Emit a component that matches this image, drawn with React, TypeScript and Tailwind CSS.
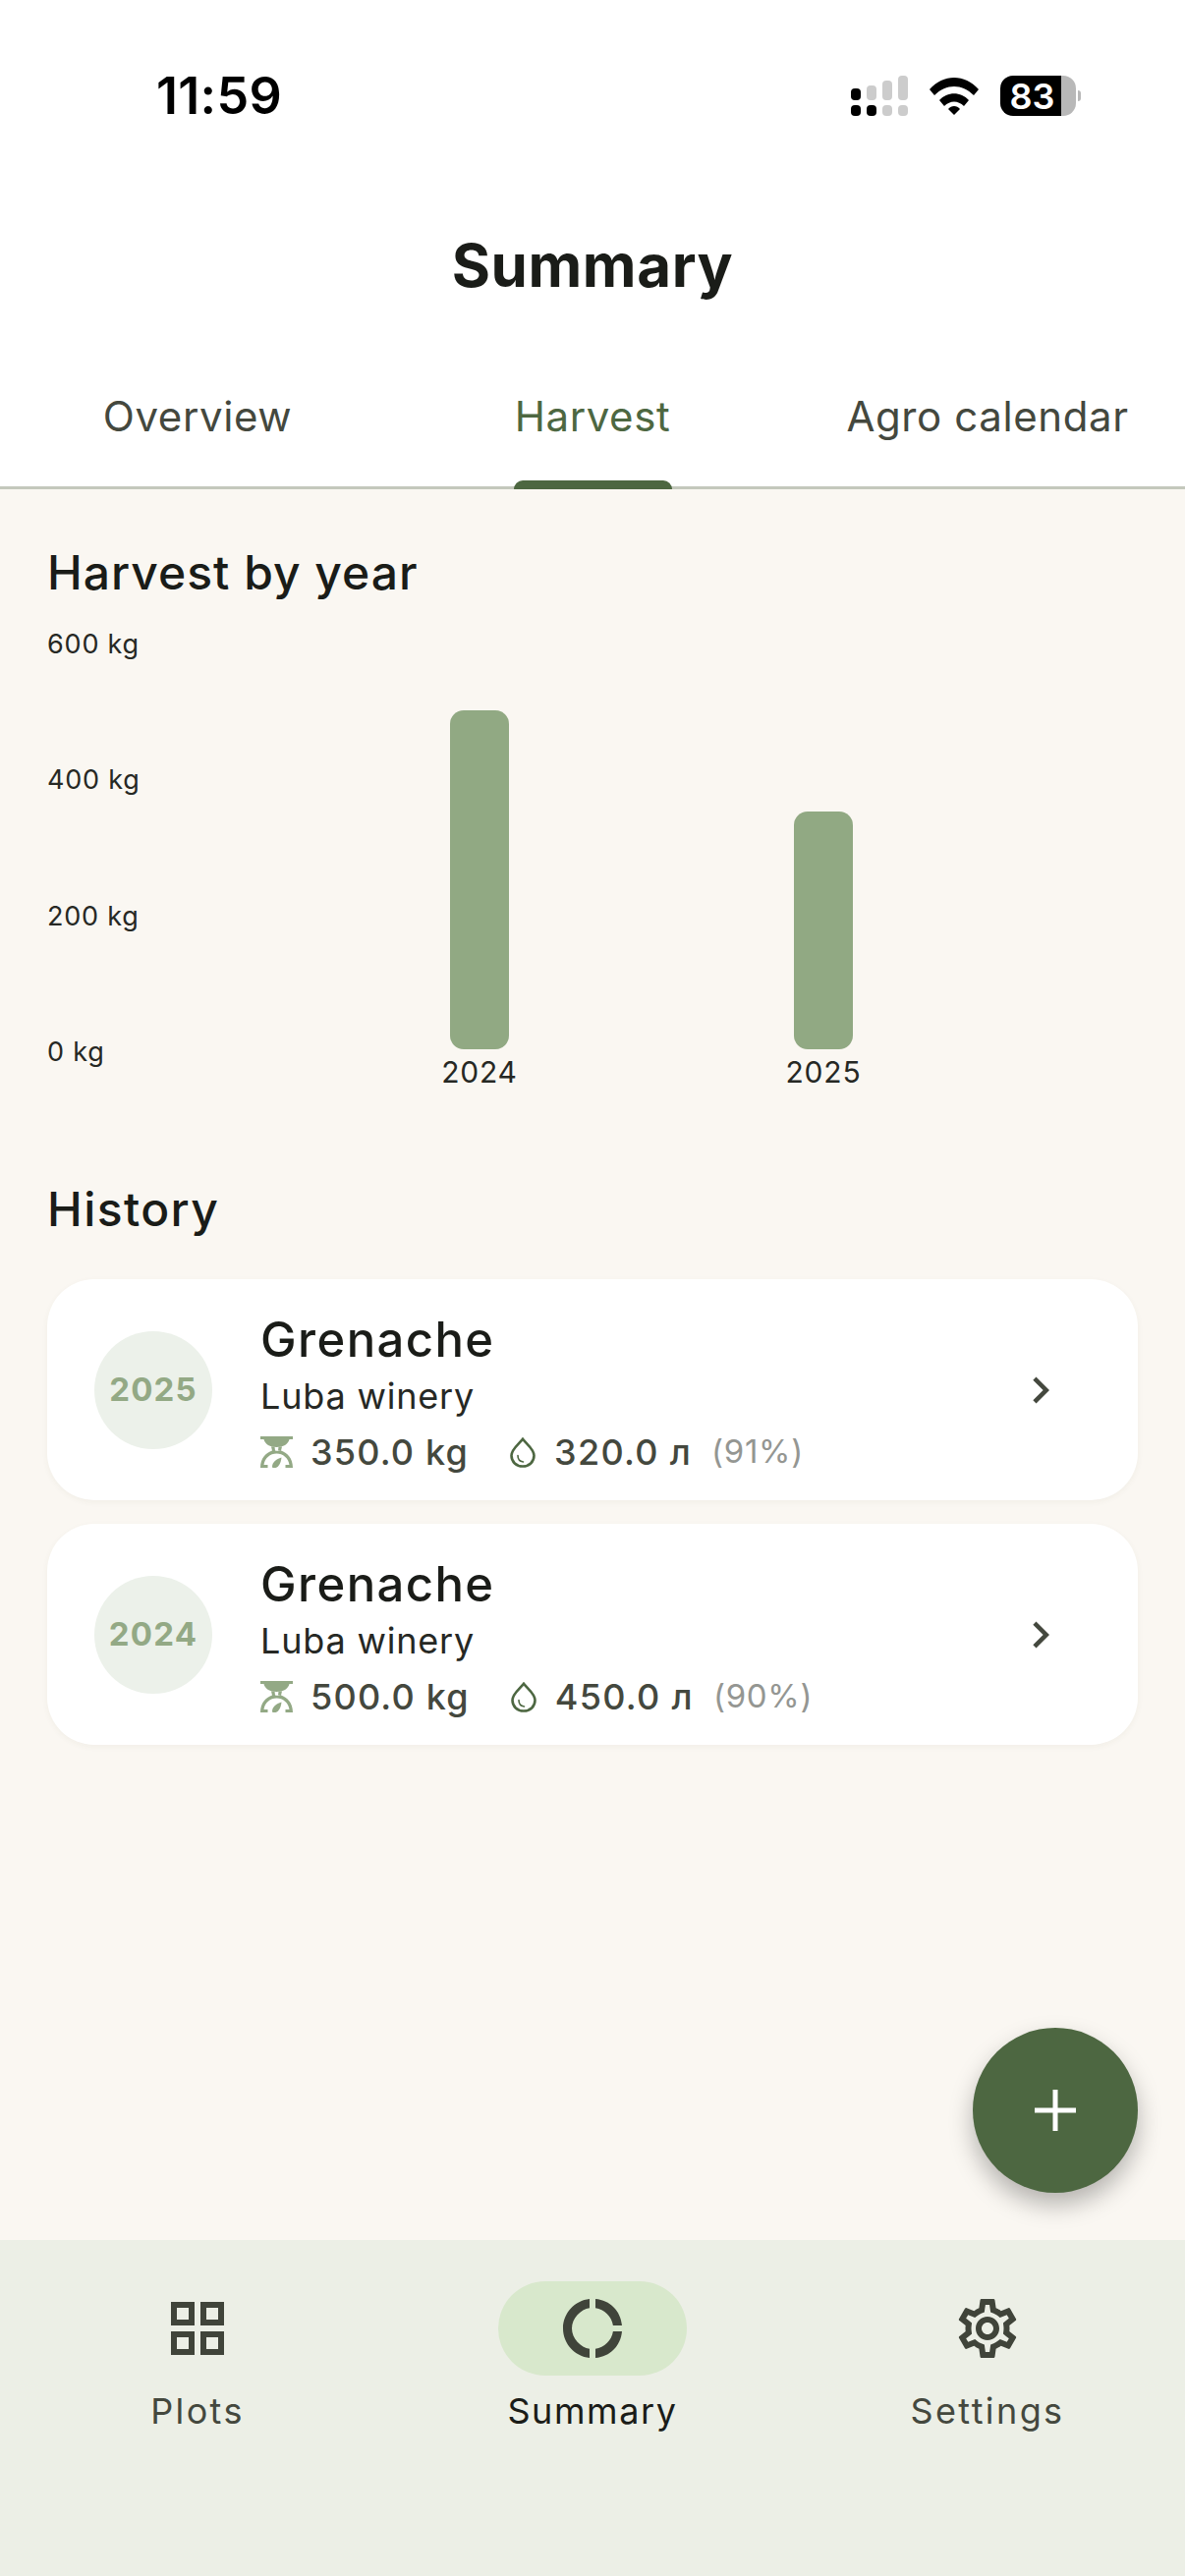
import React from 'react';
import { MdChevronRight, MdDonutLarge, MdOutlineGridView, MdOutlineSettings } from 'react-icons/md';

const tabs = ['Overview', 'Harvest', 'Agro calendar'];
const axisLabels = ['600 kg', '400 kg', '200 kg', '0 kg'];

const bars = [
  { year: '2024', height: 345 },
  { year: '2025', height: 242 },
];

const history = [
  { year: '2025', kg: '350.0 kg', litres: '320.0 л', pct: '(91%)' },
  { year: '2024', kg: '500.0 kg', litres: '450.0 л', pct: '(90%)' },
];

const navItems = [
  { label: 'Plots', icon: MdOutlineGridView, active: false },
  { label: 'Summary', icon: MdDonutLarge, active: true },
  { label: 'Settings', icon: MdOutlineSettings, active: false },
];

const SignalIcon = () => (
  <svg width="58" height="41" viewBox="0 0 58 41">
    <rect x="0" y="13" width="10" height="12" rx="4" fill="#000" />
    <rect x="16" y="10" width="10" height="15" rx="4" fill="#ccc" />
    <rect x="32" y="5" width="10" height="20" rx="4" fill="#ccc" />
    <rect x="48" y="0" width="10" height="25" rx="4" fill="#ccc" />
    <rect x="0" y="30" width="10" height="11" rx="4" fill="#000" />
    <rect x="16" y="30" width="10" height="11" rx="4" fill="#000" />
    <rect x="32" y="30" width="10" height="11" rx="4" fill="#ccc" />
    <rect x="48" y="30" width="10" height="11" rx="4" fill="#ccc" />
  </svg>
);

const WifiIcon = () => (
  <svg width="50" height="38" viewBox="0 0 50 38">
    <path d="M0 12 C14 -4 36 -4 50 12 L45 18 C33 6 17 6 5 18 Z" fill="#000" />
    <path d="M10 23 C18 14 32 14 40 23 L35 29 C29 23 21 23 15 29 Z" fill="#000" />
    <path d="M19 32 C22 28 28 28 31 32 L25 38 Z" fill="#000" />
  </svg>
);

const BatteryIcon = () => (
  <div className="flex items-center gap-[2px]">
    <div className="flex h-[41px] w-[77px] overflow-hidden rounded-[13px]">
      <div className="flex w-[62px] items-center justify-center bg-black pl-[3px] text-[36px] leading-none font-semibold text-white">
        83
      </div>
      <div className="w-[15px] bg-[#b8b8b8]" />
    </div>
    <div className="h-[11px] w-[3px] rounded-r-full bg-[#b8b8b8]" />
  </div>
);

const ScaleIcon = () => (
  <svg width="33" height="32" viewBox="0 0 33 32" fill="#93a985">
    <path d="M0 0H33V3H29.5C28.5 8 23 11 16.5 11S4.5 8 3.5 3H0Z" />
    <path d="M11 10.5H14.5L15 14.5C19 15 20 15 21 15L18 14.5L18.5 10.5H22L21 14.5C27 16.5 33 22 33 32H25.5V29H29.5C28.5 22 23 17.5 16.5 17.5S4.5 22 3.5 29H7.5V32H0C0 22 6 16.5 12 14.5Z" />
    <path d="M12 31C12 26.5 16 23 21.5 21.5C21 26.5 19 31 15.5 32H12.5Z" />
  </svg>
);

const DropIcon = () => (
  <svg width="26" height="31" viewBox="0 0 26 31" fill="none" stroke="#4d6741" strokeWidth="2.6" strokeLinecap="round">
    <path d="M13 1.8C9 7 1.5 12 1.5 18.5C1.5 25 6.5 29.5 13 29.5S24.5 25 24.5 18.5C24.5 12 17 7 13 1.8Z" />
    <path d="M8 18.5C8 22 10 24.5 13.5 25" strokeWidth="1.6" />
  </svg>
);

const HistoryCard = ({ year, kg, litres, pct }: (typeof history)[number]) => (
  <div className="flex h-[225px] items-center rounded-[48px] bg-white pr-[72px] pl-[48px] shadow-[0_2px_6px_rgba(80,70,40,0.05)]">
    <div className="flex h-[120px] w-[120px] shrink-0 items-center justify-center rounded-full bg-[#ecf1ea] text-[33px] font-bold tracking-[1.2px] text-[#93a985]">
      {year}
    </div>
    <div className="ml-[49px] flex flex-1 flex-col pt-[7px]">
      <div className="text-[49px] leading-[60px] font-medium tracking-[1.4px] text-[#1a1c18]">Grenache</div>
      <div className="mt-[3px] text-[36px] leading-[48px] tracking-[0.8px] text-[#262824]">Luba winery</div>
      <div className="mt-[9px] flex h-[48px] items-center">
        <ScaleIcon />
        <span className="ml-[18px] text-[36px] font-medium tracking-[1.2px] text-[#44483e]">{kg}</span>
        <span className="ml-[42px]">
          <DropIcon />
        </span>
        <span className="ml-[19px] text-[36px] font-medium tracking-[1.3px] text-[#44483e]">{litres}</span>
        <span className="ml-[20px] text-[33px] tracking-[0.7px] text-[#949692]">{pct}</span>
      </div>
    </div>
    <MdChevronRight className="shrink-0 text-[#44483e]" size={54} />
  </div>
);

export default function App() {
  return (
    <div className="flex h-[2622px] w-[1206px] flex-col overflow-hidden bg-white [font-family:Inter,sans-serif]">
      {/* status bar */}
      <div className="flex h-[195px] shrink-0 items-start justify-between pt-[72px] pr-[106px] pl-[159px]">
        <span className="text-[52px] leading-[52px] font-semibold tracking-[0.3px] text-black">11:59</span>
        <div className="flex items-center gap-[22px] pt-[5px]">
          <SignalIcon />
          <WifiIcon />
          <BatteryIcon />
        </div>
      </div>

      <h1 className="h-[150px] shrink-0 text-center text-[60px] leading-[150px] font-bold tracking-[0.6px] text-[#1a1c18]">Summary</h1>

      {/* tabs */}
      <div className="grid h-[153px] shrink-0 grid-cols-3 border-b-[3px] border-[#c4c8bc]">
        {tabs.map((tab) => (
          <div key={tab} className="relative flex items-center justify-center pt-[6px] text-[42px] tracking-[0.6px]">
            <span className={tab === 'Harvest' ? 'text-[#4d6741]' : 'text-[#44483e]'}>{tab}</span>
            {tab === 'Harvest' && (
              <div className="absolute bottom-[-3px] left-[121px] h-[9px] w-[161px] rounded-t-[9px] bg-[#4d6741]" />
            )}
          </div>
        ))}
      </div>

      {/* content */}
      <div className="relative flex flex-1 flex-col bg-[#faf7f2] px-[48px]">
        <h2 className="mt-[53px] text-[48px] leading-[64px] font-medium tracking-[1px] text-[#1a1c18]">Harvest by year</h2>

        <div className="mt-[22px] flex h-[472px]">
          <div className="mt-[1px] flex h-[451px] w-[265px] shrink-0 flex-col justify-between text-[27px] leading-[36px] tracking-[0.8px] text-[#262824]">
            {axisLabels.map((label) => (
              <span key={label}>{label}</span>
            ))}
          </div>
          <div className="flex h-[472px]">
            {bars.map((bar) => (
              <div key={bar.year} className="flex w-[350px] flex-col items-center justify-end">
                <div
                  className="w-[60px] rounded-[14px] bg-[#91a983]"
                  style={{ height: bar.height }}
                />
                <span className="mt-[5px] text-[30px] leading-[36px] tracking-[0.8px] text-[#262824]">{bar.year}</span>
              </div>
            ))}
          </div>
        </div>

        <h2 className="mt-[90px] text-[48px] leading-[64px] font-medium tracking-[1.4px] text-[#1a1c18]">History</h2>

        <div className="mt-[39px] flex flex-col gap-[24px]">
          {history.map((item) => (
            <HistoryCard key={item.year} {...item} />
          ))}
        </div>

        <button className="absolute right-[48px] bottom-[48px] flex h-[168px] w-[168px] items-center justify-center rounded-full bg-[#4d6741] shadow-[0_12px_24px_rgba(0,0,0,0.28)]">
          <svg width="42" height="42" viewBox="0 0 42 42" fill="#fff">
            <rect x="18.5" y="0" width="5" height="42" />
            <rect x="0" y="18.5" width="42" height="5" />
          </svg>
        </button>
      </div>

      {/* bottom nav */}
      <div className="grid h-[342px] shrink-0 grid-cols-3 bg-[#ecefe6] pt-[42px]">
        {navItems.map(({ label, icon: Icon, active }) => (
          <div key={label} className="flex flex-col items-center">
            <div className={`flex h-[96px] w-[192px] items-center justify-center rounded-full ${active ? 'bg-[#d8e8cc]' : ''}`}>
              <Icon size={72} className="text-[#40443a]" />
            </div>
            <span className={`mt-[12px] text-[36px] leading-[48px] ${active ? 'tracking-[1.6px] text-[#1a1c18]' : 'tracking-[2.4px] text-[#44483e]'}`}>
              {label}
            </span>
          </div>
        ))}
      </div>
    </div>
  );
}
